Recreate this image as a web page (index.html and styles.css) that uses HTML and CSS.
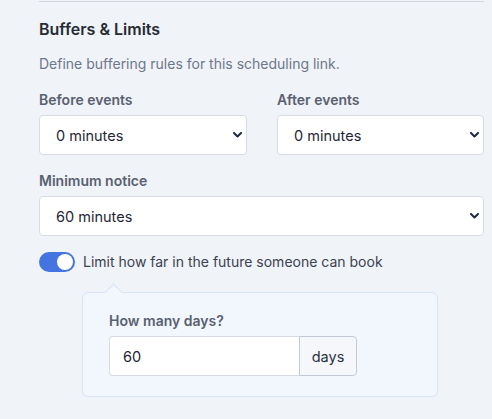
FILE: index.html
```html
<!DOCTYPE html>
<html lang="en">
<head>
<meta charset="utf-8">
<title>Buffers & Limits</title>
<link rel="stylesheet" href="styles.css">
</head>
<body>
<section class="section">
  <h2 class="title">Buffers &amp; Limits</h2>
  <p class="desc">Define buffering rules for this scheduling link.</p>

  <div class="row">
    <div class="field">
      <label class="label">Before events</label>
      <div class="select"><span>0 minutes</span>
        <svg class="chev" width="9" height="6" viewBox="0 0 9 6"><path d="M1 1l3.5 3.5L8 1" fill="none" stroke="#1e2a42" stroke-width="2" stroke-linecap="round" stroke-linejoin="round"/></svg>
      </div>
    </div>
    <div class="field">
      <label class="label">After events</label>
      <div class="select"><span>0 minutes</span>
        <svg class="chev" width="9" height="6" viewBox="0 0 9 6"><path d="M1 1l3.5 3.5L8 1" fill="none" stroke="#1e2a42" stroke-width="2" stroke-linecap="round" stroke-linejoin="round"/></svg>
      </div>
    </div>
  </div>

  <div class="field">
    <label class="label">Minimum notice</label>
    <div class="select"><span>60 minutes</span>
      <svg class="chev" width="9" height="6" viewBox="0 0 9 6"><path d="M1 1l3.5 3.5L8 1" fill="none" stroke="#1e2a42" stroke-width="2" stroke-linecap="round" stroke-linejoin="round"/></svg>
    </div>
  </div>

  <div class="toggle-row">
    <span class="toggle"><span class="knob"></span></span>
    <span class="toggle-label">Limit how far in the future someone can book</span>
  </div>

  <div class="panel">
    <label class="label">How many days?</label>
    <div class="input-group">
      <div class="input">60</div>
      <div class="addon">days</div>
    </div>
  </div>
</section>
</body>
</html>
```

FILE: styles.css
```css
* { box-sizing: border-box; }
html, body { margin: 0; padding: 0; }
body {
  background: #f0f3f8;
  font-family: Inter, "Noto Sans", sans-serif;
  width: 492px;
  height: 419px;
  overflow: hidden;
}
.section {
  margin: 1px 0 0 39px;
  width: 445px;
  border-top: 1px solid #d3d6dd;
  padding-top: 15px;
  display: flex;
  flex-direction: column;
}
.title {
  margin: 0;
  font-size: 16px;
  line-height: 24px;
  font-weight: 600;
  color: #262b33;
}
.desc {
  margin: 13px 0 0;
  font-size: 14px;
  line-height: 20px;
  color: #6e778a;
}
.row {
  margin-top: 16px;
  display: grid;
  grid-template-columns: 208px 207px;
  column-gap: 30px;
}
.field {
  display: flex;
  flex-direction: column;
  gap: 5px;
}
.section > .field { margin-top: 16px; }
.label {
  font-size: 14px;
  line-height: 20px;
  font-weight: 600;
  color: #596170;
}
.select {
  height: 40px;
  background: #fff;
  border: 1px solid #d7dce4;
  border-radius: 4px;
  display: flex;
  align-items: center;
  justify-content: space-between;
  padding: 0 4px 0 16px;
  font-size: 14.5px;
  color: #1f2637;
}
.chev { display: block; }
.toggle-row {
  margin-top: 16px;
  display: flex;
  align-items: center;
  gap: 8px;
}
.toggle {
  width: 36px;
  height: 20px;
  border-radius: 10px;
  background: #4374e0;
  display: flex;
  align-items: center;
  justify-content: flex-end;
  padding: 2px;
}
.knob {
  width: 16px;
  height: 16px;
  border-radius: 50%;
  background: #fff;
}
.toggle-label {
  font-size: 14px;
  line-height: 20px;
  color: #3b4250;
}
.panel {
  position: relative;
  margin: 20px 0 0 43px;
  width: 356px;
  background: #f2f6fd;
  border: 1px solid #d8e3f5;
  border-radius: 6px;
  padding: 18px 26px 20px;
  display: flex;
  flex-direction: column;
  gap: 5px;
}
.panel::before {
  content: "";
  position: absolute;
  left: 24px;
  top: -7px;
  width: 12px;
  height: 12px;
  background: #f2f6fd;
  border-left: 1px solid #d8e3f5;
  border-top: 1px solid #d8e3f5;
  transform: rotate(45deg);
}
.input-group {
  display: flex;
  height: 40px;
}
.input {
  width: 190px;
  background: #fff;
  border: 1px solid #d7dce4;
  border-right: none;
  border-radius: 4px 0 0 4px;
  display: flex;
  align-items: center;
  padding-left: 13px;
  font-size: 14.5px;
  color: #1f2637;
}
.addon {
  width: 58px;
  background: #f5f7fa;
  border: 1px solid #c4cad4;
  border-radius: 0 4px 4px 0;
  display: flex;
  align-items: center;
  justify-content: center;
  font-size: 14.5px;
  color: #2a3143;
}
```
